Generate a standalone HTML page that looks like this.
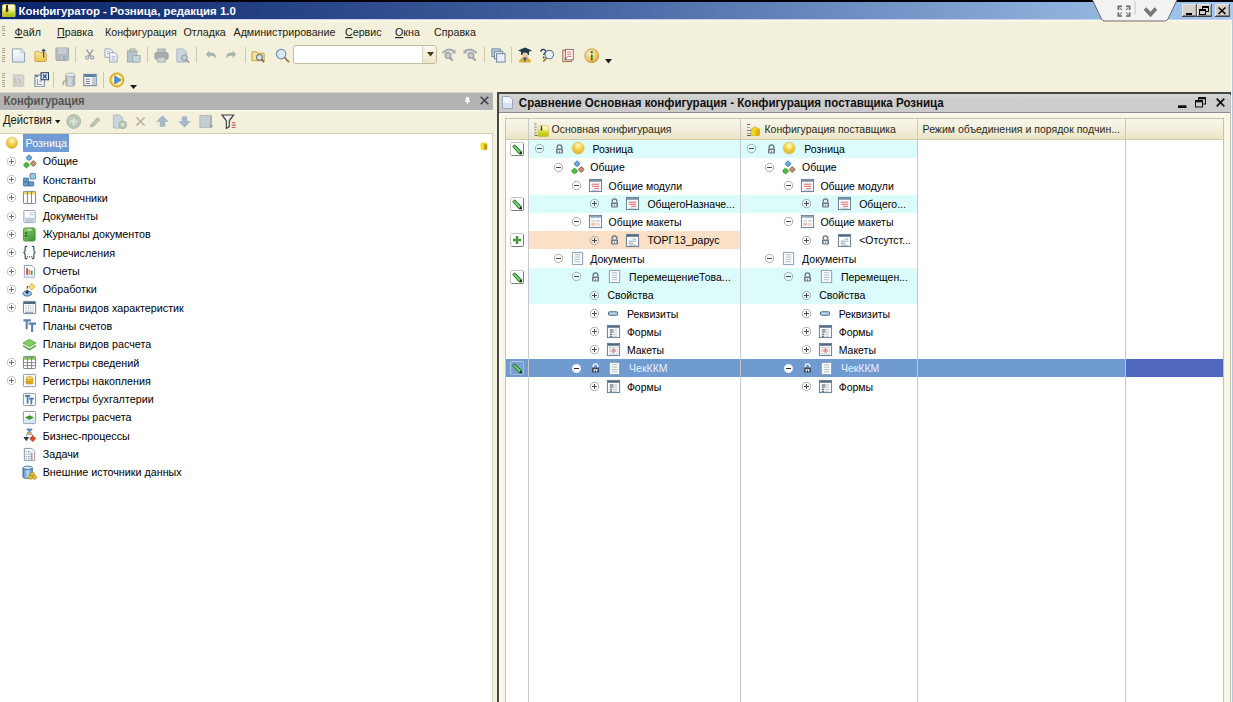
<!DOCTYPE html><html><head><meta charset="utf-8"><style>
html,body{margin:0;padding:0;}body{width:1233px;height:702px;overflow:hidden;position:relative;background:#f3f1dc;font-family:"Liberation Sans", sans-serif;}
div,svg{box-sizing:border-box;}
</style></head><body>
<div style="position:absolute;left:0px;top:20px;width:1233px;height:2px;background:#f7f5e8"></div>
<div style="position:absolute;left:1231.2px;top:20px;width:1px;height:682px;background:#f4f6fa"></div>
<div style="position:absolute;left:1232.1px;top:20px;width:1px;height:682px;background:#b4c8e2"></div>
<div style="position:absolute;left:0px;top:0px;width:1233px;height:2px;background:#000"></div>
<div style="position:absolute;left:0px;top:2px;width:1233px;height:17px;background:linear-gradient(to right,#0a246a 0%,#40609e 45%,#a6caf0 100%)"></div>
<div style="position:absolute;left:0px;top:19px;width:1233px;height:1px;background:#c8d2ea"></div>
<svg style="position:absolute;left:2px;top:3.7px" width="13.6" height="13.7" viewBox="0 0 13.6 13.7"><defs><linearGradient id="tig" x1="0" y1="0" x2="0" y2="1"><stop offset="0" stop-color="#fffbd8"/><stop offset="0.45" stop-color="#f4f0a0"/><stop offset="0.6" stop-color="#c8dc40"/><stop offset="1" stop-color="#98b818"/></linearGradient></defs><rect x="0.5" y="0.5" width="12.6" height="12.7" rx="1.5" fill="url(#tig)" stroke="#d8c040"/><path d="M4 1h2v2.5l.5 3.5-1.5 1.5L3.5 7 4 3.5z" fill="#3a3020"/><rect x="1.2" y="7" width="3" height="5" fill="#f0c020" opacity="0.6"/></svg>
<div style="position:absolute;left:18.6px;top:6.2px;font-size:11.4px;line-height:11.4px;color:#fff;font-weight:bold;white-space:nowrap;">Конфигуратор - Розница, редакция 1.0</div>
<svg style="position:absolute;left:1088px;top:0px" width="94" height="24" viewBox="0 0 94 24"><path d="M4 -1H89.5L80 19Q79 21 76.5 21H17Q14.5 21 13.5 19Z" fill="#f3f3f3" stroke="#5a5a5a" stroke-width="0.9"/><g fill="#6a6a6a"><path d="M29.5 5.5h4.5v1.6h-2.9v2.9h-1.6z"/><path d="M42.5 5.5h-4.5v1.6h2.9v2.9h1.6z"/><path d="M29.5 16.8h4.5v-1.6h-2.9v-2.9h-1.6z"/><path d="M42.5 16.8h-4.5v-1.6h2.9v-2.9h1.6z"/></g><g stroke="#8a8a8a" stroke-width="1.2"><path d="M31.5 7.5l2.5 2.5M40.5 7.5l-2.5 2.5M31.5 14.8l2.5-2.5M40.5 14.8l-2.5-2.5"/></g><line x1="47" y1="1" x2="47" y2="14.5" stroke="#c8c8c8"/><path d="M57 8.5l5.5 6 5.5-6" fill="none" stroke="#777" stroke-width="3.6" stroke-linejoin="miter"/></svg>
<svg style="position:absolute;left:1182px;top:4px" width="15" height="13" viewBox="0 0 15 13"><rect x="0" y="0" width="15" height="13" fill="#d4d0c8"/><path d="M0 13V0h15" fill="none" stroke="#fff" stroke-width="1"/><path d="M0 12.5h14.5V0" fill="none" stroke="#404040" stroke-width="1"/><path d="M1 11.5h13V1" fill="none" stroke="#808080" stroke-width="1"/><rect x="4" y="9" width="6" height="2" fill="#000"/></svg>
<svg style="position:absolute;left:1197.3px;top:4px" width="15" height="13" viewBox="0 0 15 13"><rect x="0" y="0" width="15" height="13" fill="#d4d0c8"/><path d="M0 13V0h15" fill="none" stroke="#fff" stroke-width="1"/><path d="M0 12.5h14.5V0" fill="none" stroke="#404040" stroke-width="1"/><path d="M1 11.5h13V1" fill="none" stroke="#808080" stroke-width="1"/><rect x="5.5" y="2.5" width="6" height="5" fill="none" stroke="#000"/><rect x="5.5" y="2.5" width="6" height="1.5" fill="#000"/><rect x="2.5" y="5.5" width="6" height="5" fill="#d4d0c8" stroke="#000"/><rect x="2.5" y="5.5" width="6" height="1.5" fill="#000"/></svg>
<svg style="position:absolute;left:1214.7px;top:4px" width="15" height="13" viewBox="0 0 15 13"><rect x="0" y="0" width="15" height="13" fill="#d4d0c8"/><path d="M0 13V0h15" fill="none" stroke="#fff" stroke-width="1"/><path d="M0 12.5h14.5V0" fill="none" stroke="#404040" stroke-width="1"/><path d="M1 11.5h13V1" fill="none" stroke="#808080" stroke-width="1"/><path d="M3.5 3.5l7 6.5M10.5 3.5l-7 6.5" stroke="#000" stroke-width="1.6"/></svg>
<div style="position:absolute;left:2px;top:26px;width:3px;height:11px;background:repeating-linear-gradient(to bottom,#a8a490 0 1px,transparent 1px 2.2px)"></div>
<div style="position:absolute;left:14.6px;top:26.9px;font-size:10.7px;line-height:10.7px;color:#1c1c10;font-weight:normal;white-space:nowrap;transform:scaleY(1.06);transform-origin:0 9.06px;"><span style="text-decoration:underline">Ф</span>айл</div>
<div style="position:absolute;left:57px;top:26.9px;font-size:10.7px;line-height:10.7px;color:#1c1c10;font-weight:normal;white-space:nowrap;transform:scaleY(1.06);transform-origin:0 9.06px;"><span style="text-decoration:underline">П</span>равка</div>
<div style="position:absolute;left:105px;top:26.9px;font-size:10.7px;line-height:10.7px;color:#1c1c10;font-weight:normal;white-space:nowrap;transform:scaleY(1.06);transform-origin:0 9.06px;">Конфигурация</div>
<div style="position:absolute;left:183.5px;top:26.9px;font-size:10.7px;line-height:10.7px;color:#1c1c10;font-weight:normal;white-space:nowrap;transform:scaleY(1.06);transform-origin:0 9.06px;">Отладка</div>
<div style="position:absolute;left:233.5px;top:26.9px;font-size:10.7px;line-height:10.7px;color:#1c1c10;font-weight:normal;white-space:nowrap;transform:scaleY(1.06);transform-origin:0 9.06px;">Администрирование</div>
<div style="position:absolute;left:345px;top:26.9px;font-size:10.7px;line-height:10.7px;color:#1c1c10;font-weight:normal;white-space:nowrap;transform:scaleY(1.06);transform-origin:0 9.06px;"><span style="text-decoration:underline">С</span>ервис</div>
<div style="position:absolute;left:395px;top:26.9px;font-size:10.7px;line-height:10.7px;color:#1c1c10;font-weight:normal;white-space:nowrap;transform:scaleY(1.06);transform-origin:0 9.06px;"><span style="text-decoration:underline">О</span>кна</div>
<div style="position:absolute;left:434px;top:26.9px;font-size:10.7px;line-height:10.7px;color:#1c1c10;font-weight:normal;white-space:nowrap;transform:scaleY(1.06);transform-origin:0 9.06px;">Справка</div>
<div style="position:absolute;left:2px;top:48px;width:3px;height:14px;background:repeating-linear-gradient(to bottom,#a8a490 0 1px,transparent 1px 2.2px)"></div>
<div style="position:absolute;left:2px;top:72.5px;width:3px;height:14px;background:repeating-linear-gradient(to bottom,#a8a490 0 1px,transparent 1px 2.2px)"></div>
<svg style="position:absolute;left:11.2px;top:47.5px" width="15" height="15" viewBox="0 0 16 16"><defs><linearGradient id="gnd" x1="0" y1="0" x2="0" y2="1"><stop offset="0" stop-color="#fbfdff"/><stop offset="1" stop-color="#d8e4f0"/></linearGradient></defs><path d="M1.5 1h9.5l3.5 3.5v10.5h-13z" fill="url(#gnd)" stroke="#8a9cae" stroke-linejoin="round"/><path d="M10.5 1v4h4" fill="#e8eef4" stroke="#a8b8c8" stroke-width="0.8"/></svg>
<svg style="position:absolute;left:33.5px;top:47px" width="14" height="15" viewBox="0 0 16 16"><defs><linearGradient id="gfo" x1="0" y1="0" x2="0" y2="1"><stop offset="0" stop-color="#fbe8a0"/><stop offset="1" stop-color="#e8c050"/></linearGradient></defs><path d="M1 5.5q0-1 1-1h3.5l1.5 1.5h6q1 0 1 1v8q0 1-1 1H2q-1 0-1-1z" fill="url(#gfo)" stroke="#c8a040"/><path d="M11 11.5V2.5" stroke="#2a4a70" stroke-width="1.3"/><path d="M8.3 4.2L11 1l2.7 3.2z" fill="#2a4a70"/></svg>
<svg style="position:absolute;left:55px;top:47.3px" width="14.5" height="14.5" viewBox="0 0 16 16"><rect x="1" y="1" width="14" height="14" rx="1" fill="#b4bcc4" stroke="#a0a8b0"/><rect x="3.5" y="1.5" width="9" height="5.5" fill="#d0d6dc"/><path d="M4.5 3h7M4.5 5h7" stroke="#b0b8c0" stroke-width="0.8"/><rect x="4" y="9.5" width="8" height="5" fill="#a4acb4"/><rect x="6" y="10.5" width="2" height="3" fill="#d0d6dc"/></svg>
<div style="position:absolute;left:75px;top:47px;width:1px;height:16px;background:#cfcab2"></div>
<svg style="position:absolute;left:83.5px;top:47.3px" width="11.5" height="14.5" viewBox="0 0 16 16"><path d="M3.5 1.5L10 11M12.5 1.5L6 11" stroke="#9aa2aa" stroke-width="2.2"/><circle cx="4.6" cy="12.6" r="2.2" fill="#eef0f2" stroke="#98a0a8" stroke-width="1.6"/><circle cx="11.4" cy="12.6" r="2.2" fill="#eef0f2" stroke="#98a0a8" stroke-width="1.6"/></svg>
<svg style="position:absolute;left:103.5px;top:47.5px" width="15" height="15" viewBox="0 0 16 16"><path d="M1 1h6l2 2v7H1z" fill="#f0f4f8" stroke="#98a8b8"/><path d="M6 5h6l2 2v8H6z" fill="#f0f4f8" stroke="#98a8b8"/><path d="M8 9h4M8 11h4M8 13h4M3 4h3M3 6h3" stroke="#98a8b8" stroke-width="0.8"/></svg>
<svg style="position:absolute;left:125.5px;top:47.5px" width="15" height="15" viewBox="0 0 16 16"><rect x="1.5" y="3" width="10" height="12" fill="#b8c4cc" stroke="#a0acb4"/><rect x="4.5" y="1" width="5" height="3" fill="#c8ccc4" stroke="#a8a898"/><rect x="7" y="8" width="8" height="7" fill="#c8d4dc" stroke="#a0acb4"/></svg>
<div style="position:absolute;left:146.5px;top:47px;width:1px;height:16px;background:#cfcab2"></div>
<svg style="position:absolute;left:153.5px;top:47.5px" width="15" height="15" viewBox="0 0 16 16"><rect x="4" y="1" width="8" height="5" fill="#c0c4c4" stroke="#a8acac"/><rect x="1" y="5" width="14" height="7" rx="1.5" fill="#a8acac" stroke="#989c9c"/><rect x="4" y="10" width="8" height="5" fill="#d0d4d4" stroke="#a8acac"/></svg>
<svg style="position:absolute;left:175px;top:47.5px" width="15" height="15" viewBox="0 0 16 16"><path d="M2 1h7l3 3v11H2z" fill="#c8d4e0" stroke="#a8b8c8"/><circle cx="10" cy="10.5" r="3" fill="#c0ccd8" stroke="#98a0a8" stroke-width="1.2"/><path d="M12 12.5l3 3" stroke="#a08878" stroke-width="1.6"/></svg>
<div style="position:absolute;left:195.8px;top:47px;width:1px;height:16px;background:#cfcab2"></div>
<svg style="position:absolute;left:205px;top:48.5px" width="12" height="12" viewBox="0 0 16 16"><path d="M1 7l5-5v3h3c4 0 6 3 5 8-1-3-3-4-5-4H6v3z" fill="#a8b4a8"/></svg>
<svg style="position:absolute;left:225px;top:48.5px" width="12" height="12" viewBox="0 0 16 16"><path d="M15 7l-5-5v3H7c-4 0-6 3-5 8 1-3 3-4 5-4h3v3z" fill="#a8b4a8"/></svg>
<div style="position:absolute;left:245px;top:47px;width:1px;height:16px;background:#cfcab2"></div>
<svg style="position:absolute;left:251px;top:47.5px" width="15" height="15" viewBox="0 0 16 16"><path d="M1 4h5l1 1.5h7v8H1z" fill="#f4e090" stroke="#c0a040"/><circle cx="9" cy="10" r="3" fill="#dce8f0" stroke="#607080" stroke-width="1.1"/><path d="M11 12l3 3" stroke="#906040" stroke-width="1.8"/></svg>
<svg style="position:absolute;left:275px;top:47.5px" width="15" height="15" viewBox="0 0 16 16"><circle cx="6.5" cy="6.5" r="5" fill="#d8e8f8" stroke="#7890a8" stroke-width="1.3"/><path d="M10 10l5 5" stroke="#a07050" stroke-width="2"/></svg>
<div style="position:absolute;left:293px;top:45.2px;width:143.6px;height:18.4px;background:#fff;border:1px solid #c4bc9c;border-radius:3px"></div>
<div style="position:absolute;left:422.3px;top:46.2px;width:13.3px;height:16.4px;background:linear-gradient(#fbf9ee,#ece6cc);border-left:1px solid #d8d2b8;border-radius:0 2px 2px 0"></div>
<svg style="position:absolute;left:426.5px;top:52.3px" width="7" height="4.6" viewBox="0 0 7 4.6"><path d="M0 0h7L3.5 4.6z" fill="#4a3a10"/></svg>
<svg style="position:absolute;left:441px;top:47.3px" width="15" height="15" viewBox="0 0 16 16"><path d="M1.5 6.5Q8 0 14.5 5" fill="none" stroke="#a8b0b4" stroke-width="2.2"/><path d="M15.5 2.5v4.5h-4.5z" fill="#a8b0b4"/><circle cx="7.5" cy="9" r="3" fill="#c8ccd0" stroke="#989ca0" stroke-width="1.3"/><path d="M9.5 11.5l3 3" stroke="#a09890" stroke-width="2"/></svg>
<svg style="position:absolute;left:462.7px;top:47.3px" width="15" height="15" viewBox="0 0 16 16"><path d="M14.5 6.5Q8 0 1.5 5" fill="none" stroke="#a8b0b4" stroke-width="2.2"/><path d="M0.5 2.5v4.5h4.5z" fill="#a8b0b4"/><circle cx="8.5" cy="9" r="3" fill="#c8ccd0" stroke="#989ca0" stroke-width="1.3"/><path d="M10.5 11.5l3 3" stroke="#a09890" stroke-width="2"/></svg>
<div style="position:absolute;left:484px;top:47px;width:1px;height:16px;background:#cfcab2"></div>
<svg style="position:absolute;left:490.5px;top:47.5px" width="15" height="15" viewBox="0 0 16 16"><rect x="1" y="1" width="9" height="8" fill="#c8d8e8" stroke="#6a8098"/><rect x="3.5" y="3.5" width="9" height="8" fill="#d8e4f0" stroke="#6a8098"/><rect x="6" y="6" width="9" height="9" fill="#e8f0f8" stroke="#6a8098"/></svg>
<div style="position:absolute;left:510.5px;top:47px;width:1px;height:16px;background:#cfcab2"></div>
<svg style="position:absolute;left:517.4px;top:46px" width="16" height="17" viewBox="0 0 16 16"><path d="M1 4l7-3 7 3-7 3z" fill="#203848"/><path d="M4 5.5v3h8v-3" fill="#203848"/><circle cx="8" cy="9" r="3" fill="#f0c8a0"/><path d="M2 16c0-3 2-5 6-5s6 2 6 5z" fill="#d8b040"/><path d="M6 11l2 5 2-5" fill="#406080"/></svg>
<svg style="position:absolute;left:539px;top:47.5px" width="16" height="15" viewBox="0 0 16 16"><path d="M1.5 4a2.5 2.5 0 0 1 5 0c0 1.5-2 2-2 3.5" fill="none" stroke="#203060" stroke-width="1.4"/><circle cx="4.5" cy="10" r="0.9" fill="#203060"/><circle cx="10.5" cy="7" r="4.5" fill="#e8f0f8" stroke="#6a7a8a" stroke-width="1.2"/><path d="M7.5 10.5L4 14.5" stroke="#a07850" stroke-width="1.8"/></svg>
<svg style="position:absolute;left:561px;top:47.5px" width="14" height="15" viewBox="0 0 16 16"><rect x="2" y="2" width="10" height="13" fill="#f4e0c8" stroke="#a06040"/><rect x="5" y="1" width="9" height="12" fill="#fff" stroke="#8a6048"/><path d="M7 4h5M7 6.5h5M7 9h5" stroke="#e04040" stroke-width="0.9"/><path d="M4 13l3-3" stroke="#404040"/></svg>
<svg style="position:absolute;left:583.7px;top:47.5px" width="15.5" height="15.5" viewBox="0 0 16 16"><defs><radialGradient id="gin" cx="0.4" cy="0.35" r="0.7"><stop offset="0" stop-color="#fff4c8"/><stop offset="0.7" stop-color="#f0c060"/><stop offset="1" stop-color="#d89838"/></radialGradient></defs><circle cx="8" cy="8" r="7.2" fill="url(#gin)" stroke="#c89040" stroke-width="0.8"/><circle cx="8" cy="4.4" r="1.2" fill="#3a7a20"/><rect x="7" y="6.6" width="2" height="6.4" rx="0.5" fill="#3a7a20"/></svg>
<svg style="position:absolute;left:604.5px;top:59px" width="7" height="4.5" viewBox="0 0 7 4.5"><path d="M0 0h7L3.5 4.5z" fill="#1a1a1a"/></svg>
<svg style="position:absolute;left:11.8px;top:72.5px" width="13" height="15" viewBox="0 0 16 16"><rect x="1.5" y="1" width="13" height="14" rx="1" fill="#d4d4d0" stroke="#c0c0bc"/><path d="M4 4v7h3M7 7h3v4h2" stroke="#b4b4b0" fill="none" stroke-width="0.9"/></svg>
<svg style="position:absolute;left:34.4px;top:71.5px" width="15" height="15.5" viewBox="0 0 16 16"><rect x="1" y="3" width="10" height="12.5" fill="#f4f6f8" stroke="#6a7c90"/><rect x="1.5" y="3.5" width="3" height="1.5" fill="#506880"/><path d="M3.5 7v6h2M5.5 9.5h3M5.5 13h3" stroke="#607080" stroke-width="0.8" fill="none"/><rect x="7.5" y="0.5" width="8" height="7.5" fill="#e8f0f8" stroke="#203850" stroke-width="1.1"/><path d="M9.5 2.3l4 4M13.5 2.3l-4 4" stroke="#2a5a98" stroke-width="1.6"/></svg>
<div style="position:absolute;left:53.2px;top:72px;width:1px;height:16px;background:#cfcab2"></div>
<svg style="position:absolute;left:59.7px;top:72.3px" width="16" height="15.5" viewBox="0 0 16 16"><defs><linearGradient id="gdb" x1="0" y1="0" x2="1" y2="0"><stop offset="0" stop-color="#a8b0b4"/><stop offset="0.45" stop-color="#dce0e4"/><stop offset="1" stop-color="#a0a8ac"/></linearGradient></defs><path d="M5.5 3v10c0 1.2 2 2 4.8 2s4.8-.8 4.8-2V3" fill="url(#gdb)" stroke="#a4acb0" stroke-width="0.8"/><ellipse cx="10.3" cy="3" rx="4.8" ry="2" fill="#e4e8ea" stroke="#a4acb0" stroke-width="0.8"/><path d="M7 8.5C4 8.5 2.5 10.5 3 13.5" fill="none" stroke="#a8b4a0" stroke-width="1.7"/><path d="M5.5 6.5L8 8.5 5.5 10.5z" fill="#a8b4a0"/></svg>
<svg style="position:absolute;left:83px;top:72.5px" width="14" height="14" viewBox="0 0 16 16"><rect x="1" y="1.5" width="14" height="13" fill="#fff" stroke="#506880"/><rect x="1.5" y="2" width="13" height="2.5" fill="#5078a0"/><rect x="10" y="5" width="4.5" height="9" fill="#c0c8d0"/><path d="M3 7h5M3 9.5h5M3 12h5" stroke="#405060" stroke-width="0.9"/></svg>
<div style="position:absolute;left:102.5px;top:72px;width:1px;height:16px;background:#cfcab2"></div>
<svg style="position:absolute;left:108.8px;top:72px" width="15.8" height="15.8" viewBox="0 0 16 16"><defs><radialGradient id="gpl" cx="0.5" cy="0.35" r="0.7"><stop offset="0" stop-color="#fffce8"/><stop offset="1" stop-color="#f4e4a0"/></radialGradient></defs><circle cx="8" cy="8" r="7.1" fill="#f0c028" stroke="#c89818" stroke-width="0.9"/><circle cx="8" cy="8" r="5.4" fill="url(#gpl)"/><path d="M5.8 3.8v8.4L12.5 8z" fill="#4a94d8" stroke="#2a6ab0" stroke-width="0.6"/></svg>
<svg style="position:absolute;left:129.8px;top:85px" width="7" height="4" viewBox="0 0 7 4"><path d="M0 0h7L3.5 4z" fill="#1a1a1a"/></svg>
<div style="position:absolute;left:0px;top:92.2px;width:493px;height:1px;background:#d4d4cc"></div>
<div style="position:absolute;left:0px;top:93px;width:493px;height:16.8px;background:#b3b3b3"></div>
<div style="position:absolute;left:0px;top:109.8px;width:493px;height:1.6px;background:#faf8e8"></div>
<div style="position:absolute;left:3.4px;top:96px;font-size:11.2px;line-height:11.2px;color:#555555;font-weight:bold;white-space:nowrap;transform:scaleY(1.06);transform-origin:0 9.48px;">Конфигурация</div>
<svg style="position:absolute;left:464.5px;top:96.5px" width="5" height="7.5" viewBox="0 0 5 7.5"><path d="M1 0.5h3v4H1z" fill="#fff" stroke="#f0f0f0"/><path d="M0 4.5h5M2.5 4.5V7.5" stroke="#fff"/></svg>
<svg style="position:absolute;left:479.6px;top:96.3px" width="9" height="9" viewBox="0 0 9 9"><path d="M0.7 0.7l7.6 7.6M8.3 0.7L0.7 8.3" stroke="#444" stroke-width="1.6"/></svg>
<div style="position:absolute;left:2.9px;top:114.6px;font-size:11.2px;line-height:11.2px;color:#1c1c10;font-weight:normal;white-space:nowrap;transform:scaleY(1.1);transform-origin:0 9.48px;">Действия</div>
<svg style="position:absolute;left:55px;top:120px" width="5.5" height="3.5" viewBox="0 0 5.5 3.5"><path d="M0 0h5.5L2.75 3.5z" fill="#1a1a1a"/></svg>
<svg style="position:absolute;left:66.2px;top:113.9px" width="15.4" height="15" viewBox="0 0 16 16"><circle cx="8" cy="8" r="7.4" fill="#bcc8b8" stroke="#a8b8a4"/><path d="M8 4v8M4 8h8" stroke="#dfe8dc" stroke-width="2"/></svg>
<svg style="position:absolute;left:89.3px;top:114.5px" width="12.5" height="13" viewBox="0 0 16 16"><path d="M2 12l9-9 3 3-9 9H2z" fill="#b8c4b0" stroke="#a8b4a0" stroke-width="0.8"/></svg>
<svg style="position:absolute;left:111.6px;top:114px" width="15" height="15" viewBox="0 0 16 16"><path d="M1.5 1h7l3 3v11h-10z" fill="#c8d4dc" stroke="#b0bcc4"/><circle cx="11.5" cy="11.5" r="4" fill="#b8c8b4" stroke="#a0b09c"/><path d="M11.5 9.5v4M9.5 11.5h4" stroke="#e0e8dc" stroke-width="1.2"/></svg>
<svg style="position:absolute;left:134.7px;top:115.5px" width="11" height="11" viewBox="0 0 16 16"><path d="M2 2l12 12M14 2L2 14" stroke="#c4b4ac" stroke-width="2.4"/></svg>
<svg style="position:absolute;left:155.5px;top:114.5px" width="13" height="13" viewBox="0 0 16 16"><path d="M8 1l7 7h-4v6H5V8H1z" fill="#a8b8c8" stroke="#98a8b8" stroke-width="0.6"/></svg>
<svg style="position:absolute;left:177.9px;top:115px" width="13" height="13" viewBox="0 0 16 16"><path d="M8 15l7-7h-4V2H5v6H1z" fill="#a8b8c8" stroke="#98a8b8" stroke-width="0.6"/></svg>
<svg style="position:absolute;left:199.4px;top:114px" width="14" height="15" viewBox="0 0 16 16"><rect x="1" y="1" width="12" height="14" fill="#c4ccd4" stroke="#b0b8c0"/><path d="M14 1v13M12 12l2 3 2-3" stroke="#8090a0" fill="none"/></svg>
<svg style="position:absolute;left:221px;top:113.5px" width="15.5" height="15.5" viewBox="0 0 16 16"><path d="M1 1h12l-4.5 6v6l-3 2V7z" fill="#f0f0f0" stroke="#404040" stroke-width="1.2"/><path d="M11 9h4M11 11.5h4M11 14h4" stroke="#e04040" stroke-width="1"/><path d="M12 11.5h3" stroke="#40a0e0"/></svg>
<div style="position:absolute;left:0px;top:132.7px;width:493px;height:1px;background:#d2ccb0"></div>
<div style="position:absolute;left:0px;top:133.7px;width:493px;height:568.3px;background:#fff;border-right:1px solid #d8d4c0"></div>
<div style="position:absolute;left:23px;top:133.75px;width:46px;height:18px;background:#6f9bd6"></div>
<svg style="position:absolute;left:4.5px;top:136.1px" width="13.6" height="13.6" viewBox="0 0 16 16"><defs><radialGradient id="gc" cx="0.5" cy="0.3" r="0.75"><stop offset="0" stop-color="#fffbd0"/><stop offset="0.45" stop-color="#f4d448"/><stop offset="1" stop-color="#d8a818"/></radialGradient></defs><circle cx="8" cy="8" r="6.8" fill="url(#gc)" stroke="#d8c888" stroke-width="0.9"/></svg>
<div style="position:absolute;left:25.5px;top:137.9px;font-size:10.75px;line-height:10.75px;color:#fff;font-weight:normal;white-space:nowrap;transform:scaleY(1.07);transform-origin:0 9.10px;">Розница</div>
<svg style="position:absolute;left:6px;top:156px" width="11" height="11" viewBox="0 0 11 11"><circle cx="5.5" cy="5.5" r="4.2" fill="none" stroke="#c0c2c2" stroke-width="1"/><path d="M3 5.5h5" stroke="#707070" stroke-width="1"/><path d="M5.5 3v5" stroke="#707070" stroke-width="1"/></svg>
<svg style="position:absolute;left:21.7px;top:153.70000000000002px" width="15" height="15" viewBox="0 0 16 16"><rect x="-2.4" y="-2.4" width="4.8" height="4.8" rx="1.4" transform="translate(7.5 4) rotate(45)" fill="#6aaee0" stroke="#2f6a9a" stroke-width="0.8"/><rect x="-2.4" y="-2.4" width="4.8" height="4.8" rx="1.4" transform="translate(4.8 11.8) rotate(45)" fill="#50c040" stroke="#2a8020" stroke-width="0.8"/><rect x="-2.4" y="-2.4" width="4.8" height="4.8" rx="1.4" transform="translate(12 10.2) rotate(45)" fill="#c09070" stroke="#7a5030" stroke-width="0.8"/></svg>
<div style="position:absolute;left:42.7px;top:156.20000000000002px;font-size:10.75px;line-height:10.75px;color:#000;font-weight:normal;white-space:nowrap;transform:scaleY(1.07);transform-origin:0 9.10px;">Общие</div>
<svg style="position:absolute;left:6px;top:174px" width="11" height="11" viewBox="0 0 11 11"><circle cx="5.5" cy="5.5" r="4.2" fill="none" stroke="#c0c2c2" stroke-width="1"/><path d="M3 5.5h5" stroke="#707070" stroke-width="1"/><path d="M5.5 3v5" stroke="#707070" stroke-width="1"/></svg>
<svg style="position:absolute;left:21.7px;top:172.0px" width="15" height="15" viewBox="0 0 16 16"><g fill="#6a9cc8" stroke="#2f5f8a" stroke-width="0.8"><rect x="1.5" y="6.5" width="5.5" height="4" rx="0.8"/><rect x="1.5" y="10.5" width="5.5" height="4.5" rx="0.8"/><rect x="7" y="10.5" width="5.5" height="4.5" rx="0.8"/></g><rect x="8.5" y="1.5" width="6" height="6" rx="0.8" fill="#9cc8e8" stroke="#3f6f9a" stroke-width="0.8"/></svg>
<div style="position:absolute;left:42.7px;top:174.5px;font-size:10.75px;line-height:10.75px;color:#000;font-weight:normal;white-space:nowrap;transform:scaleY(1.07);transform-origin:0 9.10px;">Константы</div>
<svg style="position:absolute;left:6px;top:192px" width="11" height="11" viewBox="0 0 11 11"><circle cx="5.5" cy="5.5" r="4.2" fill="none" stroke="#c0c2c2" stroke-width="1"/><path d="M3 5.5h5" stroke="#707070" stroke-width="1"/><path d="M5.5 3v5" stroke="#707070" stroke-width="1"/></svg>
<svg style="position:absolute;left:21.7px;top:190.3px" width="15" height="15" viewBox="0 0 16 16"><rect x="1.5" y="1.5" width="13" height="13" rx="0.8" fill="#fff" stroke="#687c90" stroke-width="1"/><rect x="2" y="2" width="12" height="2.6" fill="#e8d860"/><line x1="5.8" y1="2" x2="5.8" y2="14" stroke="#687c90"/><line x1="10.2" y1="2" x2="10.2" y2="14" stroke="#687c90"/></svg>
<div style="position:absolute;left:42.7px;top:192.8px;font-size:10.75px;line-height:10.75px;color:#000;font-weight:normal;white-space:nowrap;transform:scaleY(1.07);transform-origin:0 9.10px;">Справочники</div>
<svg style="position:absolute;left:6px;top:211px" width="11" height="11" viewBox="0 0 11 11"><circle cx="5.5" cy="5.5" r="4.2" fill="none" stroke="#c0c2c2" stroke-width="1"/><path d="M3 5.5h5" stroke="#707070" stroke-width="1"/><path d="M5.5 3v5" stroke="#707070" stroke-width="1"/></svg>
<svg style="position:absolute;left:21.7px;top:208.6px" width="15" height="15" viewBox="0 0 16 16"><rect x="2" y="1.5" width="12" height="13" rx="0.8" fill="#fafcfe" stroke="#8a9aaa" stroke-width="1"/><path d="M2.5 9h11v5h-11z" fill="#d0e0ee"/><path d="M8 4h4M8 6h4M4 10.5h8M4 12.5h8" stroke="#a0b0c0" stroke-width="0.8"/></svg>
<div style="position:absolute;left:42.7px;top:211.1px;font-size:10.75px;line-height:10.75px;color:#000;font-weight:normal;white-space:nowrap;transform:scaleY(1.07);transform-origin:0 9.10px;">Документы</div>
<svg style="position:absolute;left:6px;top:229px" width="11" height="11" viewBox="0 0 11 11"><circle cx="5.5" cy="5.5" r="4.2" fill="none" stroke="#c0c2c2" stroke-width="1"/><path d="M3 5.5h5" stroke="#707070" stroke-width="1"/><path d="M5.5 3v5" stroke="#707070" stroke-width="1"/></svg>
<svg style="position:absolute;left:21.7px;top:226.9px" width="15" height="15" viewBox="0 0 16 16"><defs><linearGradient id="gj" x1="0" y1="0" x2="1" y2="1"><stop offset="0" stop-color="#90d070"/><stop offset="1" stop-color="#3a9030"/></linearGradient></defs><rect x="1.5" y="1" width="12.5" height="14" rx="1.8" fill="url(#gj)" stroke="#4a8a38" stroke-width="0.9"/><path d="M5.5 3h5" stroke="#e0ffd0" stroke-width="1.2"/><path d="M3 6.5h2.5M3 9.5h2.5" stroke="#1a4a10" stroke-width="1.3"/></svg>
<div style="position:absolute;left:42.7px;top:229.4px;font-size:10.75px;line-height:10.75px;color:#000;font-weight:normal;white-space:nowrap;transform:scaleY(1.07);transform-origin:0 9.10px;">Журналы документов</div>
<svg style="position:absolute;left:6px;top:247px" width="11" height="11" viewBox="0 0 11 11"><circle cx="5.5" cy="5.5" r="4.2" fill="none" stroke="#c0c2c2" stroke-width="1"/><path d="M3 5.5h5" stroke="#707070" stroke-width="1"/><path d="M5.5 3v5" stroke="#707070" stroke-width="1"/></svg>
<svg style="position:absolute;left:21.7px;top:245.20000000000002px" width="15" height="15" viewBox="0 0 16 16"><path d="M5.5 1.5H4.2Q3.3 1.5 3.3 2.5v4L2 8l1.3 1.5v4q0 1 .9 1h1.3M10.5 1.5h1.3q.9 0 .9 1v4L14 8l-1.3 1.5v4q0 1-.9 1h-1.3" fill="none" stroke="#304860" stroke-width="1.2"/><rect x="5" y="12" width="1.3" height="1.3" fill="#304860"/><rect x="7.4" y="12" width="1.3" height="1.3" fill="#304860"/><rect x="9.8" y="12" width="1.3" height="1.3" fill="#304860"/></svg>
<div style="position:absolute;left:42.7px;top:247.70000000000002px;font-size:10.75px;line-height:10.75px;color:#000;font-weight:normal;white-space:nowrap;transform:scaleY(1.07);transform-origin:0 9.10px;">Перечисления</div>
<svg style="position:absolute;left:6px;top:266px" width="11" height="11" viewBox="0 0 11 11"><circle cx="5.5" cy="5.5" r="4.2" fill="none" stroke="#c0c2c2" stroke-width="1"/><path d="M3 5.5h5" stroke="#707070" stroke-width="1"/><path d="M5.5 3v5" stroke="#707070" stroke-width="1"/></svg>
<svg style="position:absolute;left:21.7px;top:263.5px" width="15" height="15" viewBox="0 0 16 16"><path d="M2.5 1.5h8l3 3v10h-11z" fill="#fafcfe" stroke="#8098b0" stroke-width="1"/><path d="M2.5 12h11v2.5h-11z" fill="#d8e4ee"/><rect x="4.5" y="4.5" width="1.8" height="7" fill="#c84030"/><rect x="7" y="6" width="1.8" height="5.5" fill="#e89040"/><rect x="9.5" y="7" width="1.8" height="4.5" fill="#40a040"/></svg>
<div style="position:absolute;left:42.7px;top:266.0px;font-size:10.75px;line-height:10.75px;color:#000;font-weight:normal;white-space:nowrap;transform:scaleY(1.07);transform-origin:0 9.10px;">Отчеты</div>
<svg style="position:absolute;left:6px;top:284px" width="11" height="11" viewBox="0 0 11 11"><circle cx="5.5" cy="5.5" r="4.2" fill="none" stroke="#c0c2c2" stroke-width="1"/><path d="M3 5.5h5" stroke="#707070" stroke-width="1"/><path d="M5.5 3v5" stroke="#707070" stroke-width="1"/></svg>
<svg style="position:absolute;left:21.7px;top:281.79999999999995px" width="15" height="15" viewBox="0 0 16 16"><path d="M10.5 1.5l3.5 3.5-3.5 3.5L7 5z" fill="#f8e070" stroke="#c0a020" stroke-width="0.8"/><ellipse cx="5.5" cy="12.3" rx="4.5" ry="2.7" fill="#90c4e8" stroke="#406890" stroke-width="1"/><path d="M5.5 5h2" stroke="#101010" stroke-width="1.1" stroke-dasharray="1 0.8"/><path d="M5.5 5v6" stroke="#101010" stroke-width="1.1" stroke-dasharray="1 0.8"/><path d="M3.5 10l2 2.8 2-2.8z" fill="#101010"/></svg>
<div style="position:absolute;left:42.7px;top:284.29999999999995px;font-size:10.75px;line-height:10.75px;color:#000;font-weight:normal;white-space:nowrap;transform:scaleY(1.07);transform-origin:0 9.10px;">Обработки</div>
<svg style="position:absolute;left:6px;top:302px" width="11" height="11" viewBox="0 0 11 11"><circle cx="5.5" cy="5.5" r="4.2" fill="none" stroke="#c0c2c2" stroke-width="1"/><path d="M3 5.5h5" stroke="#707070" stroke-width="1"/><path d="M5.5 3v5" stroke="#707070" stroke-width="1"/></svg>
<svg style="position:absolute;left:21.7px;top:300.1px" width="15" height="15" viewBox="0 0 16 16"><rect x="1.5" y="1.5" width="13" height="13" rx="0.8" fill="#fff" stroke="#687c90" stroke-width="1"/><rect x="2" y="2" width="12" height="2.3" fill="#506880"/><path d="M4.3 5.5v6M6.8 5.5v6M9.3 5.5v6M11.8 5.5v6" stroke="#8a98a8" stroke-width="0.9" stroke-dasharray="1 0.7"/><path d="M3.5 13h9" stroke="#303840" stroke-width="1.1" stroke-dasharray="1.2 1"/></svg>
<div style="position:absolute;left:42.7px;top:302.6px;font-size:10.75px;line-height:10.75px;color:#000;font-weight:normal;white-space:nowrap;transform:scaleY(1.07);transform-origin:0 9.10px;">Планы видов характеристик</div>
<svg style="position:absolute;left:21.7px;top:318.4px" width="15" height="15" viewBox="0 0 16 16"><path d="M1.5 2.5h8M5 2.5v9.5M7 6h8M10.8 6v9" fill="none" stroke="#5a82aa" stroke-width="2.2"/></svg>
<div style="position:absolute;left:42.7px;top:320.9px;font-size:10.75px;line-height:10.75px;color:#000;font-weight:normal;white-space:nowrap;transform:scaleY(1.07);transform-origin:0 9.10px;">Планы счетов</div>
<svg style="position:absolute;left:21.7px;top:336.7px" width="15" height="15" viewBox="0 0 16 16"><path d="M8 2.5l7 4-7 4-7-4z" fill="#80cc60" stroke="#3e9a2e" stroke-width="0.7"/><path d="M1.5 9l6.5 3.8L14.5 9l.5.5L8 14 1 9.5z" fill="#4aaa38" stroke="#3a8a2a" stroke-width="0.6"/></svg>
<div style="position:absolute;left:42.7px;top:339.2px;font-size:10.75px;line-height:10.75px;color:#000;font-weight:normal;white-space:nowrap;transform:scaleY(1.07);transform-origin:0 9.10px;">Планы видов расчета</div>
<svg style="position:absolute;left:6px;top:357px" width="11" height="11" viewBox="0 0 11 11"><circle cx="5.5" cy="5.5" r="4.2" fill="none" stroke="#c0c2c2" stroke-width="1"/><path d="M3 5.5h5" stroke="#707070" stroke-width="1"/><path d="M5.5 3v5" stroke="#707070" stroke-width="1"/></svg>
<svg style="position:absolute;left:21.7px;top:355.0px" width="15" height="15" viewBox="0 0 16 16"><rect x="1.5" y="1.5" width="13" height="13" rx="1" fill="#fff" stroke="#6a7a88" stroke-width="1"/><rect x="2" y="2" width="12" height="3" fill="#88c060"/><path d="M2 8.2h12M2 11.3h12M5.8 2v12M10.2 2v12" stroke="#6a7a88" stroke-width="0.9"/></svg>
<div style="position:absolute;left:42.7px;top:357.5px;font-size:10.75px;line-height:10.75px;color:#000;font-weight:normal;white-space:nowrap;transform:scaleY(1.07);transform-origin:0 9.10px;">Регистры сведений</div>
<svg style="position:absolute;left:6px;top:375px" width="11" height="11" viewBox="0 0 11 11"><circle cx="5.5" cy="5.5" r="4.2" fill="none" stroke="#c0c2c2" stroke-width="1"/><path d="M3 5.5h5" stroke="#707070" stroke-width="1"/><path d="M5.5 3v5" stroke="#707070" stroke-width="1"/></svg>
<svg style="position:absolute;left:21.7px;top:373.29999999999995px" width="15" height="15" viewBox="0 0 16 16"><rect x="1.5" y="1.5" width="13" height="13" rx="1" fill="#f8fafc" stroke="#8092a4" stroke-width="1"/><ellipse cx="8" cy="10" rx="4" ry="1.8" fill="#e0b020" stroke="#b08010" stroke-width="0.6"/><ellipse cx="8" cy="7.6" rx="4" ry="1.8" fill="#f0c838" stroke="#b08010" stroke-width="0.6"/><ellipse cx="8" cy="5.4" rx="3.6" ry="1.6" fill="#f8e070" stroke="#b08010" stroke-width="0.6"/></svg>
<div style="position:absolute;left:42.7px;top:375.79999999999995px;font-size:10.75px;line-height:10.75px;color:#000;font-weight:normal;white-space:nowrap;transform:scaleY(1.07);transform-origin:0 9.10px;">Регистры накопления</div>
<svg style="position:absolute;left:21.7px;top:391.59999999999997px" width="15" height="15" viewBox="0 0 16 16"><rect x="1.5" y="1.5" width="13" height="13" rx="1" fill="#f4f8fc" stroke="#8092a4" stroke-width="1"/><path d="M3.3 4.2h5.5M6 4.2v8M7.5 7h5M10 7v6" fill="none" stroke="#4a78a8" stroke-width="1.8"/></svg>
<div style="position:absolute;left:42.7px;top:394.09999999999997px;font-size:10.75px;line-height:10.75px;color:#000;font-weight:normal;white-space:nowrap;transform:scaleY(1.07);transform-origin:0 9.10px;">Регистры бухгалтерии</div>
<svg style="position:absolute;left:21.7px;top:409.9px" width="15" height="15" viewBox="0 0 16 16"><rect x="1.5" y="1.5" width="13" height="13" rx="1" fill="#fafcfe" stroke="#8092a4" stroke-width="1"/><path d="M2 9.5h12v4.5H2z" fill="#d8e6f2"/><path d="M8 5.5l5 2.5-5 2.5-5-2.5z" fill="#3a9a30"/></svg>
<div style="position:absolute;left:42.7px;top:412.4px;font-size:10.75px;line-height:10.75px;color:#000;font-weight:normal;white-space:nowrap;transform:scaleY(1.07);transform-origin:0 9.10px;">Регистры расчета</div>
<svg style="position:absolute;left:21.7px;top:428.2px" width="15" height="15" viewBox="0 0 16 16"><path d="M5 1h6L8 4.5z" fill="#5aa0d8" stroke="#2a5a90" stroke-width="0.6"/><rect x="6" y="4.5" width="4" height="2.3" fill="#f0c070" stroke="#b08040" stroke-width="0.5"/><path d="M5 9V6.5h6V9" fill="none" stroke="#8090a0" stroke-width="0.8"/><path d="M1.5 9.5h6L4.5 14z" fill="#203850"/><path d="M11.5 8l3.3 3.3-3.3 3.3-3.3-3.3z" fill="#e04828" stroke="#a02810" stroke-width="0.5"/></svg>
<div style="position:absolute;left:42.7px;top:430.7px;font-size:10.75px;line-height:10.75px;color:#000;font-weight:normal;white-space:nowrap;transform:scaleY(1.07);transform-origin:0 9.10px;">Бизнес-процессы</div>
<svg style="position:absolute;left:21.7px;top:446.5px" width="15" height="15" viewBox="0 0 16 16"><path d="M2.5 1.5h8l3 3v10h-11z" fill="#fafcfe" stroke="#8098b0" stroke-width="1"/><path d="M4 5h1.3M4 7.5h1.3M4 10h1.3M4 12.5h1.3M6.5 5h3M6.5 7.5h3M6.5 10h3M6.5 12.5h3" stroke="#607080" stroke-width="1" stroke-dasharray="1 .6"/><path d="M10.5 6v7.5" stroke="#e07070" stroke-width="1.4"/></svg>
<div style="position:absolute;left:42.7px;top:449.0px;font-size:10.75px;line-height:10.75px;color:#000;font-weight:normal;white-space:nowrap;transform:scaleY(1.07);transform-origin:0 9.10px;">Задачи</div>
<svg style="position:absolute;left:21.7px;top:464.8px" width="15" height="15" viewBox="0 0 16 16"><defs><linearGradient id="ge" x1="0" y1="0" x2="1" y2="0"><stop offset="0" stop-color="#4a88c0"/><stop offset="0.5" stop-color="#b0d8f4"/><stop offset="1" stop-color="#5a98d0"/></linearGradient></defs><path d="M1 3v9.5c0 1.2 2.2 2 5 2s5-.8 5-2V3" fill="url(#ge)" stroke="#305880" stroke-width="0.8"/><ellipse cx="6" cy="3" rx="5" ry="1.8" fill="#d0e8f8" stroke="#305880" stroke-width="0.8"/><g fill="#f0c030" stroke="#a07810" stroke-width="0.7"><circle cx="11" cy="9.8" r="2.2"/><circle cx="9" cy="13" r="2.2"/><circle cx="13.2" cy="13" r="2.2"/></g></svg>
<div style="position:absolute;left:42.7px;top:467.3px;font-size:10.75px;line-height:10.75px;color:#000;font-weight:normal;white-space:nowrap;transform:scaleY(1.07);transform-origin:0 9.10px;">Внешние источники данных</div>
<svg style="position:absolute;left:479.8px;top:141.6px" width="8" height="8.5" viewBox="0 0 8 8.5"><path d="M0.5 1.5L2.5 0.5h3l1.8 1.2v5.5L5.5 8.3h-3L0.5 7z" fill="#f0e020"/><path d="M4.2 1.8h3v5.5L5.5 8.3H4.2z" fill="#c8a818"/><path d="M5 3v4M6.3 3v4" stroke="#a08010" stroke-width="0.5"/></svg>
<div style="position:absolute;left:493px;top:92px;width:4px;height:610px;background:#f3f1dc"></div>
<div style="position:absolute;left:497px;top:92.3px;width:734px;height:609.7px;background:#454545;"></div>
<div style="position:absolute;left:499.3px;top:94.3px;width:730.8px;height:607.7px;background:#f9f7e4"></div>
<div style="position:absolute;left:499.3px;top:94.3px;width:730.8px;height:17.4px;background:linear-gradient(#d6d6d6,#cdcdcd 30%,#cbcbcb)"></div>
<div style="position:absolute;left:499.3px;top:111.7px;width:730.8px;height:1.2px;background:#8c8c8c"></div>
<div style="position:absolute;left:1230px;top:94.8px;width:1.2px;height:607.2px;background:#c4c0b4"></div>
<div style="position:absolute;left:499.3px;top:112.9px;width:2px;height:590px;background:#fdfcf4"></div>
<div style="position:absolute;left:499.3px;top:112.9px;width:730.8px;height:2px;background:#fbfaf0"></div>
<svg style="position:absolute;left:501.9px;top:95.8px" width="11" height="13" viewBox="0 0 11 13"><path d="M0.5 0.5h7l3 3v9h-10z" fill="#f0f6fc" stroke="#98a8b8"/><path d="M1 7h9v5H1z" fill="#d8e4f0"/></svg>
<div style="position:absolute;left:518.8px;top:98.0px;font-size:11.55px;line-height:11.55px;color:#101010;font-weight:bold;white-space:nowrap;transform:scaleY(1.08);transform-origin:0 9.78px;">Сравнение Основная конфигурация - Конфигурация поставщика Розница</div>
<svg style="position:absolute;left:1178px;top:104.8px" width="8.5" height="3.4" viewBox="0 0 8.5 3.4"><rect x="0" y="0.3" width="8.5" height="2.8" fill="#111"/></svg>
<svg style="position:absolute;left:1194.9px;top:97.2px" width="11" height="10.5" viewBox="0 0 11 10.5"><rect x="3.5" y="0.5" width="7" height="6.5" fill="none" stroke="#111"/><rect x="3.5" y="0.5" width="7" height="1.8" fill="#111"/><rect x="0.5" y="3.5" width="7" height="6.5" fill="#cbcbcb" stroke="#111"/><rect x="0.5" y="3.5" width="7" height="1.8" fill="#111"/></svg>
<svg style="position:absolute;left:1216.2px;top:98.3px" width="9" height="9" viewBox="0 0 9 9"><path d="M0.7 0.7l7.6 7.6M8.3 0.7L0.7 8.3" stroke="#111" stroke-width="1.7"/></svg>
<div style="position:absolute;left:505.2px;top:118.3px;width:718.3999999999999px;height:583.7px;background:#fff;border:1px solid #c8c4ac;border-bottom:none"></div>
<div style="position:absolute;left:506.2px;top:119.0px;width:716.3999999999999px;height:21px;background:linear-gradient(#f9f7ea,#f3efdc 50%,#ebe4c6);border-bottom:1px solid #d2cbaa"></div>
<div style="position:absolute;left:528.0px;top:119.3px;width:1px;height:583.7px;background:#c8c8c8"></div>
<div style="position:absolute;left:740.0px;top:119.3px;width:1px;height:583.7px;background:#c8c8c8"></div>
<div style="position:absolute;left:916.8px;top:119.3px;width:1px;height:583.7px;background:#c8c8c8"></div>
<div style="position:absolute;left:1125.3px;top:119.3px;width:1px;height:583.7px;background:#c8c8c8"></div>
<svg style="position:absolute;left:534.2px;top:122.8px" width="15" height="14" viewBox="0 0 15 14"><g stroke-width="1"><path d="M0.5 1h2" stroke="#a05050"/><path d="M0.5 4h2M0.5 7h2M0.5 10h2" stroke="#707070"/><path d="M0.5 12.5h3" stroke="#606060"/><path d="M0.5 1v12" stroke="#d0d0d0" stroke-width="0.6"/></g><defs><linearGradient id="hig" x1="0" y1="0" x2="0" y2="1"><stop offset="0" stop-color="#fcf8d0"/><stop offset="0.4" stop-color="#f0f090"/><stop offset="0.55" stop-color="#d8d820"/><stop offset="1" stop-color="#b8c010"/></linearGradient></defs><rect x="4" y="2.5" width="10.5" height="11.3" rx="1.3" fill="url(#hig)" stroke="#c8c078" stroke-width="0.7"/><path d="M6.8 3h1.3v2.5l.4 1.5-1 1-1-1 .3-1.5z" fill="#40382a"/></svg>
<div style="position:absolute;left:551.6px;top:123.5px;font-size:10.5px;line-height:10.5px;color:#2a2a18;font-weight:normal;white-space:nowrap;transform:scaleY(1.1);transform-origin:0 8.89px;">Основная конфигурация</div>
<svg style="position:absolute;left:746.3px;top:122.8px" width="14" height="13.5" viewBox="0 0 14 13.5"><g stroke-width="1"><path d="M1 1.5h3" stroke="#d04040"/><path d="M1 4.5h3" stroke="#a0a0a0"/><path d="M1 7.5h4" stroke="#4080c0"/><path d="M1 10.5h4" stroke="#a0a0a0"/><path d="M1 12.5h4" stroke="#606060"/></g><path d="M5 6l4-2 4.5 2v6l-4.5 1.5L5 12z" fill="#f0d820" stroke="#c0a010" stroke-width="0.6"/><path d="M9.5 7.5v6l4-1.5V6z" fill="#d8b018"/></svg>
<div style="position:absolute;left:764.5px;top:123.5px;font-size:10.5px;line-height:10.5px;color:#2a2a18;font-weight:normal;white-space:nowrap;transform:scaleY(1.1);transform-origin:0 8.89px;">Конфигурация поставщика</div>
<div style="position:absolute;left:922.6px;top:123.5px;font-size:10.5px;line-height:10.5px;color:#2a2a18;font-weight:normal;white-space:nowrap;transform:scaleY(1.1);transform-origin:0 8.89px;">Режим объединения и порядок подчин...</div>
<div style="position:absolute;left:529.0px;top:139.75px;width:211.0px;height:18.27px;background:#dcfcfc"></div>
<div style="position:absolute;left:741.0px;top:139.75px;width:175.79999999999995px;height:18.27px;background:#dcfcfc"></div>
<svg style="position:absolute;left:509.8px;top:141.75px" width="14" height="14" viewBox="0 0 14 14"><rect x="0.5" y="0.5" width="13" height="13" rx="1.2" fill="#fff" stroke="#c4c4c4" stroke-width="1"/><path d="M13.5 1.5v11q0 1-1 1H1.5" fill="none" stroke="#7c7c7c" stroke-width="1"/><path d="M2.8 4.6l1.8-1.8 7 7-0.6 2.2-2.2-.4z" fill="#52b852" stroke="#1e6a1e" stroke-width="0.9"/><path d="M4.2 4.6l5.8 5.8" stroke="#a8f0a0" stroke-width="0.9"/><path d="M9.2 11.6l2.8.8-.8-2.8z" fill="#0a1a0a"/></svg>
<svg style="position:absolute;left:534px;top:143px" width="11" height="11" viewBox="0 0 11 11"><circle cx="5.5" cy="5.5" r="4.2" fill="none" stroke="#a8aeae" stroke-width="1"/><path d="M3 5.5h5" stroke="#4a4a4a" stroke-width="1"/></svg>
<svg style="position:absolute;left:554.7px;top:143.685px" width="9" height="10" viewBox="0 0 9 10"><path d="M2.2 4.6V3.2a2.3 2.3 0 0 1 4.6 0v1.4" fill="none" stroke="#6a7684" stroke-width="1.4"/><rect x="1" y="4.4" width="7" height="5" rx="1" fill="#6a7684"/><rect x="2.6" y="6.2" width="1.4" height="2.4" fill="#e8eef4"/><rect x="5" y="6.2" width="1.4" height="2.4" fill="#e8eef4"/><rect x="2.6" y="6.2" width="3.8" height="1" fill="#e8eef4"/></svg>
<svg style="position:absolute;left:570.6px;top:141.285px" width="14.2" height="14.2" viewBox="0 0 16 16"><defs><radialGradient id="gc" cx="0.5" cy="0.3" r="0.75"><stop offset="0" stop-color="#fffbd0"/><stop offset="0.45" stop-color="#f4d448"/><stop offset="1" stop-color="#d8a818"/></radialGradient></defs><circle cx="8" cy="8" r="6.8" fill="url(#gc)" stroke="#d8c888" stroke-width="0.9"/></svg>
<div style="position:absolute;left:592.5px;top:144.08499999999998px;font-size:10.5px;line-height:10.5px;color:#000;font-weight:normal;white-space:nowrap;transform:scaleY(1.1);transform-origin:0 8.89px;">Розница</div>
<svg style="position:absolute;left:746px;top:143px" width="11" height="11" viewBox="0 0 11 11"><circle cx="5.5" cy="5.5" r="4.2" fill="none" stroke="#a8aeae" stroke-width="1"/><path d="M3 5.5h5" stroke="#4a4a4a" stroke-width="1"/></svg>
<svg style="position:absolute;left:766.5px;top:143.685px" width="9" height="10" viewBox="0 0 9 10"><path d="M2.2 4.6V3.2a2.3 2.3 0 0 1 4.6 0v1.4" fill="none" stroke="#6a7684" stroke-width="1.4"/><rect x="1" y="4.4" width="7" height="5" rx="1" fill="#6a7684"/><rect x="2.6" y="6.2" width="1.4" height="2.4" fill="#e8eef4"/><rect x="5" y="6.2" width="1.4" height="2.4" fill="#e8eef4"/><rect x="2.6" y="6.2" width="3.8" height="1" fill="#e8eef4"/></svg>
<svg style="position:absolute;left:782.4px;top:141.285px" width="14.2" height="14.2" viewBox="0 0 16 16"><defs><radialGradient id="gc" cx="0.5" cy="0.3" r="0.75"><stop offset="0" stop-color="#fffbd0"/><stop offset="0.45" stop-color="#f4d448"/><stop offset="1" stop-color="#d8a818"/></radialGradient></defs><circle cx="8" cy="8" r="6.8" fill="url(#gc)" stroke="#d8c888" stroke-width="0.9"/></svg>
<div style="position:absolute;left:804.3px;top:144.08499999999998px;font-size:10.5px;line-height:10.5px;color:#000;font-weight:normal;white-space:nowrap;transform:scaleY(1.1);transform-origin:0 8.89px;">Розница</div>
<svg style="position:absolute;left:553px;top:162px" width="11" height="11" viewBox="0 0 11 11"><circle cx="5.5" cy="5.5" r="4.2" fill="none" stroke="#a8aeae" stroke-width="1"/><path d="M3 5.5h5" stroke="#4a4a4a" stroke-width="1"/></svg>
<svg style="position:absolute;left:569.5999999999999px;top:159.655px" width="15" height="15" viewBox="0 0 16 16"><rect x="-2.4" y="-2.4" width="4.8" height="4.8" rx="1.4" transform="translate(7.5 4) rotate(45)" fill="#6aaee0" stroke="#2f6a9a" stroke-width="0.8"/><rect x="-2.4" y="-2.4" width="4.8" height="4.8" rx="1.4" transform="translate(4.8 11.8) rotate(45)" fill="#50c040" stroke="#2a8020" stroke-width="0.8"/><rect x="-2.4" y="-2.4" width="4.8" height="4.8" rx="1.4" transform="translate(12 10.2) rotate(45)" fill="#c09070" stroke="#7a5030" stroke-width="0.8"/></svg>
<div style="position:absolute;left:590.3px;top:162.355px;font-size:10.5px;line-height:10.5px;color:#000;font-weight:normal;white-space:nowrap;transform:scaleY(1.1);transform-origin:0 8.89px;">Общие</div>
<svg style="position:absolute;left:764px;top:162px" width="11" height="11" viewBox="0 0 11 11"><circle cx="5.5" cy="5.5" r="4.2" fill="none" stroke="#a8aeae" stroke-width="1"/><path d="M3 5.5h5" stroke="#4a4a4a" stroke-width="1"/></svg>
<svg style="position:absolute;left:781.3999999999999px;top:159.655px" width="15" height="15" viewBox="0 0 16 16"><rect x="-2.4" y="-2.4" width="4.8" height="4.8" rx="1.4" transform="translate(7.5 4) rotate(45)" fill="#6aaee0" stroke="#2f6a9a" stroke-width="0.8"/><rect x="-2.4" y="-2.4" width="4.8" height="4.8" rx="1.4" transform="translate(4.8 11.8) rotate(45)" fill="#50c040" stroke="#2a8020" stroke-width="0.8"/><rect x="-2.4" y="-2.4" width="4.8" height="4.8" rx="1.4" transform="translate(12 10.2) rotate(45)" fill="#c09070" stroke="#7a5030" stroke-width="0.8"/></svg>
<div style="position:absolute;left:802.0999999999999px;top:162.355px;font-size:10.5px;line-height:10.5px;color:#000;font-weight:normal;white-space:nowrap;transform:scaleY(1.1);transform-origin:0 8.89px;">Общие</div>
<svg style="position:absolute;left:571px;top:180px" width="11" height="11" viewBox="0 0 11 11"><circle cx="5.5" cy="5.5" r="4.2" fill="none" stroke="#a8aeae" stroke-width="1"/><path d="M3 5.5h5" stroke="#4a4a4a" stroke-width="1"/></svg>
<svg style="position:absolute;left:587.9px;top:177.92499999999998px" width="15" height="15" viewBox="0 0 16 16"><rect x="1.5" y="1.5" width="13" height="13" fill="#f8fafc" stroke="#60788f" stroke-width="1"/><rect x="2" y="2" width="12" height="2" fill="#7890a8"/><path d="M4 6.6h8M4 8.8h8M6.5 11h5.5" stroke="#e06060" stroke-width="1"/><path d="M4 13h8" stroke="#a0b0d0" stroke-width="0.8"/></svg>
<div style="position:absolute;left:608.6px;top:180.62499999999997px;font-size:10.5px;line-height:10.5px;color:#000;font-weight:normal;white-space:nowrap;transform:scaleY(1.1);transform-origin:0 8.89px;">Общие модули</div>
<svg style="position:absolute;left:783px;top:180px" width="11" height="11" viewBox="0 0 11 11"><circle cx="5.5" cy="5.5" r="4.2" fill="none" stroke="#a8aeae" stroke-width="1"/><path d="M3 5.5h5" stroke="#4a4a4a" stroke-width="1"/></svg>
<svg style="position:absolute;left:799.6999999999999px;top:177.92499999999998px" width="15" height="15" viewBox="0 0 16 16"><rect x="1.5" y="1.5" width="13" height="13" fill="#f8fafc" stroke="#60788f" stroke-width="1"/><rect x="2" y="2" width="12" height="2" fill="#7890a8"/><path d="M4 6.6h8M4 8.8h8M6.5 11h5.5" stroke="#e06060" stroke-width="1"/><path d="M4 13h8" stroke="#a0b0d0" stroke-width="0.8"/></svg>
<div style="position:absolute;left:820.4px;top:180.62499999999997px;font-size:10.5px;line-height:10.5px;color:#000;font-weight:normal;white-space:nowrap;transform:scaleY(1.1);transform-origin:0 8.89px;">Общие модули</div>
<div style="position:absolute;left:529.0px;top:194.56px;width:211.0px;height:18.27px;background:#dcfcfc"></div>
<div style="position:absolute;left:741.0px;top:194.56px;width:175.79999999999995px;height:18.27px;background:#dcfcfc"></div>
<svg style="position:absolute;left:509.8px;top:196.56px" width="14" height="14" viewBox="0 0 14 14"><rect x="0.5" y="0.5" width="13" height="13" rx="1.2" fill="#fff" stroke="#c4c4c4" stroke-width="1"/><path d="M13.5 1.5v11q0 1-1 1H1.5" fill="none" stroke="#7c7c7c" stroke-width="1"/><path d="M2.8 4.6l1.8-1.8 7 7-0.6 2.2-2.2-.4z" fill="#52b852" stroke="#1e6a1e" stroke-width="0.9"/><path d="M4.2 4.6l5.8 5.8" stroke="#a8f0a0" stroke-width="0.9"/><path d="M9.2 11.6l2.8.8-.8-2.8z" fill="#0a1a0a"/></svg>
<svg style="position:absolute;left:589px;top:198px" width="11" height="11" viewBox="0 0 11 11"><circle cx="5.5" cy="5.5" r="4.2" fill="none" stroke="#a8aeae" stroke-width="1"/><path d="M3 5.5h5" stroke="#4a4a4a" stroke-width="1"/><path d="M5.5 3v5" stroke="#4a4a4a" stroke-width="1"/></svg>
<svg style="position:absolute;left:609.6px;top:198.495px" width="9" height="10" viewBox="0 0 9 10"><path d="M2.2 4.6V3.2a2.3 2.3 0 0 1 4.6 0v1.4" fill="none" stroke="#6a7684" stroke-width="1.4"/><rect x="1" y="4.4" width="7" height="5" rx="1" fill="#6a7684"/><rect x="2.6" y="6.2" width="1.4" height="2.4" fill="#e8eef4"/><rect x="5" y="6.2" width="1.4" height="2.4" fill="#e8eef4"/><rect x="2.6" y="6.2" width="3.8" height="1" fill="#e8eef4"/></svg>
<svg style="position:absolute;left:625.0px;top:196.195px" width="15" height="15" viewBox="0 0 16 16"><rect x="1.5" y="1.5" width="13" height="13" fill="#f8fafc" stroke="#60788f" stroke-width="1"/><rect x="2" y="2" width="12" height="2" fill="#7890a8"/><path d="M4 6.6h8M4 8.8h8M6.5 11h5.5" stroke="#e06060" stroke-width="1"/><path d="M4 13h8" stroke="#a0b0d0" stroke-width="0.8"/></svg>
<div style="position:absolute;left:647.4px;top:198.89499999999998px;font-size:10.5px;line-height:10.5px;color:#000;font-weight:normal;white-space:nowrap;transform:scaleY(1.1);transform-origin:0 8.89px;">ОбщегоНазначе...</div>
<svg style="position:absolute;left:801px;top:198px" width="11" height="11" viewBox="0 0 11 11"><circle cx="5.5" cy="5.5" r="4.2" fill="none" stroke="#a8aeae" stroke-width="1"/><path d="M3 5.5h5" stroke="#4a4a4a" stroke-width="1"/><path d="M5.5 3v5" stroke="#4a4a4a" stroke-width="1"/></svg>
<svg style="position:absolute;left:821.4px;top:198.495px" width="9" height="10" viewBox="0 0 9 10"><path d="M2.2 4.6V3.2a2.3 2.3 0 0 1 4.6 0v1.4" fill="none" stroke="#6a7684" stroke-width="1.4"/><rect x="1" y="4.4" width="7" height="5" rx="1" fill="#6a7684"/><rect x="2.6" y="6.2" width="1.4" height="2.4" fill="#e8eef4"/><rect x="5" y="6.2" width="1.4" height="2.4" fill="#e8eef4"/><rect x="2.6" y="6.2" width="3.8" height="1" fill="#e8eef4"/></svg>
<svg style="position:absolute;left:836.8px;top:196.195px" width="15" height="15" viewBox="0 0 16 16"><rect x="1.5" y="1.5" width="13" height="13" fill="#f8fafc" stroke="#60788f" stroke-width="1"/><rect x="2" y="2" width="12" height="2" fill="#7890a8"/><path d="M4 6.6h8M4 8.8h8M6.5 11h5.5" stroke="#e06060" stroke-width="1"/><path d="M4 13h8" stroke="#a0b0d0" stroke-width="0.8"/></svg>
<div style="position:absolute;left:859.1999999999999px;top:198.89499999999998px;font-size:10.5px;line-height:10.5px;color:#000;font-weight:normal;white-space:nowrap;transform:scaleY(1.1);transform-origin:0 8.89px;">Общего...</div>
<svg style="position:absolute;left:571px;top:216px" width="11" height="11" viewBox="0 0 11 11"><circle cx="5.5" cy="5.5" r="4.2" fill="none" stroke="#a8aeae" stroke-width="1"/><path d="M3 5.5h5" stroke="#4a4a4a" stroke-width="1"/></svg>
<svg style="position:absolute;left:587.9px;top:214.46499999999997px" width="15" height="15" viewBox="0 0 16 16"><rect x="1.5" y="1.5" width="13" height="13" fill="#fff" stroke="#60788f" stroke-width="1"/><rect x="2" y="2" width="12" height="2" fill="#90a8c0"/><g fill="#d8dce4"><rect x="3.5" y="6" width="4" height="2.5"/><rect x="8.5" y="6" width="4" height="2.5"/><rect x="8.5" y="9.5" width="4" height="3"/></g><rect x="3.5" y="9.5" width="4" height="3" fill="#f0c0a0"/></svg>
<div style="position:absolute;left:608.6px;top:217.16499999999996px;font-size:10.5px;line-height:10.5px;color:#000;font-weight:normal;white-space:nowrap;transform:scaleY(1.1);transform-origin:0 8.89px;">Общие макеты</div>
<svg style="position:absolute;left:783px;top:216px" width="11" height="11" viewBox="0 0 11 11"><circle cx="5.5" cy="5.5" r="4.2" fill="none" stroke="#a8aeae" stroke-width="1"/><path d="M3 5.5h5" stroke="#4a4a4a" stroke-width="1"/></svg>
<svg style="position:absolute;left:799.6999999999999px;top:214.46499999999997px" width="15" height="15" viewBox="0 0 16 16"><rect x="1.5" y="1.5" width="13" height="13" fill="#fff" stroke="#60788f" stroke-width="1"/><rect x="2" y="2" width="12" height="2" fill="#90a8c0"/><g fill="#d8dce4"><rect x="3.5" y="6" width="4" height="2.5"/><rect x="8.5" y="6" width="4" height="2.5"/><rect x="8.5" y="9.5" width="4" height="3"/></g><rect x="3.5" y="9.5" width="4" height="3" fill="#f0c0a0"/></svg>
<div style="position:absolute;left:820.4px;top:217.16499999999996px;font-size:10.5px;line-height:10.5px;color:#000;font-weight:normal;white-space:nowrap;transform:scaleY(1.1);transform-origin:0 8.89px;">Общие макеты</div>
<div style="position:absolute;left:529.0px;top:231.1px;width:211.0px;height:18.27px;background:#fae0c6"></div>
<svg style="position:absolute;left:509.8px;top:233.1px" width="14" height="14" viewBox="0 0 14 14"><rect x="0.5" y="0.5" width="13" height="13" rx="1.2" fill="#fff" stroke="#c4c4c4" stroke-width="1"/><path d="M13.5 1.5v11q0 1-1 1H1.5" fill="none" stroke="#7c7c7c" stroke-width="1"/><path d="M7 3v8M3 7h8" stroke="#2a8a2a" stroke-width="2.3"/><path d="M7 3.5v7M3.5 7h7" stroke="#58c050" stroke-width="0.8"/></svg>
<svg style="position:absolute;left:589px;top:235px" width="11" height="11" viewBox="0 0 11 11"><circle cx="5.5" cy="5.5" r="4.2" fill="none" stroke="#a8aeae" stroke-width="1"/><path d="M3 5.5h5" stroke="#4a4a4a" stroke-width="1"/><path d="M5.5 3v5" stroke="#4a4a4a" stroke-width="1"/></svg>
<svg style="position:absolute;left:609.6px;top:235.035px" width="9" height="10" viewBox="0 0 9 10"><path d="M2.2 4.6V3.2a2.3 2.3 0 0 1 4.6 0v1.4" fill="none" stroke="#6a7684" stroke-width="1.4"/><rect x="1" y="4.4" width="7" height="5" rx="1" fill="#6a7684"/><rect x="2.6" y="6.2" width="1.4" height="2.4" fill="#e8eef4"/><rect x="5" y="6.2" width="1.4" height="2.4" fill="#e8eef4"/><rect x="2.6" y="6.2" width="3.8" height="1" fill="#e8eef4"/></svg>
<svg style="position:absolute;left:625.0px;top:232.73499999999999px" width="15" height="15" viewBox="0 0 16 16"><rect x="1.5" y="1.5" width="13" height="13" fill="#fff" stroke="#60788f" stroke-width="1"/><rect x="2" y="2" width="12" height="2" fill="#506880"/><path d="M8 6.5h4M4 8.7h8M4 10.9h5M4 13h8" stroke="#8aa4c4" stroke-width="1"/><path d="M4 10.9h4" stroke="#e8a080" stroke-width="1"/></svg>
<div style="position:absolute;left:647.4px;top:235.43499999999997px;font-size:10.5px;line-height:10.5px;color:#000;font-weight:normal;white-space:nowrap;transform:scaleY(1.1);transform-origin:0 8.89px;">ТОРГ13_рарус</div>
<svg style="position:absolute;left:801px;top:235px" width="11" height="11" viewBox="0 0 11 11"><circle cx="5.5" cy="5.5" r="4.2" fill="none" stroke="#a8aeae" stroke-width="1"/><path d="M3 5.5h5" stroke="#4a4a4a" stroke-width="1"/><path d="M5.5 3v5" stroke="#4a4a4a" stroke-width="1"/></svg>
<svg style="position:absolute;left:821.4px;top:235.035px" width="9" height="10" viewBox="0 0 9 10"><path d="M2.2 4.6V3.2a2.3 2.3 0 0 1 4.6 0v1.4" fill="none" stroke="#6a7684" stroke-width="1.4"/><rect x="1" y="4.4" width="7" height="5" rx="1" fill="#6a7684"/><rect x="2.6" y="6.2" width="1.4" height="2.4" fill="#e8eef4"/><rect x="5" y="6.2" width="1.4" height="2.4" fill="#e8eef4"/><rect x="2.6" y="6.2" width="3.8" height="1" fill="#e8eef4"/></svg>
<svg style="position:absolute;left:836.8px;top:232.73499999999999px" width="15" height="15" viewBox="0 0 16 16"><rect x="1.5" y="1.5" width="13" height="13" fill="#fff" stroke="#60788f" stroke-width="1"/><rect x="2" y="2" width="12" height="2" fill="#506880"/><path d="M8 6.5h4M4 8.7h8M4 10.9h5M4 13h8" stroke="#8aa4c4" stroke-width="1"/><path d="M4 10.9h4" stroke="#e8a080" stroke-width="1"/></svg>
<div style="position:absolute;left:859.1999999999999px;top:235.43499999999997px;font-size:10.5px;line-height:10.5px;color:#000;font-weight:normal;white-space:nowrap;transform:scaleY(1.1);transform-origin:0 8.89px;">&lt;Отсутст...</div>
<svg style="position:absolute;left:553px;top:253px" width="11" height="11" viewBox="0 0 11 11"><circle cx="5.5" cy="5.5" r="4.2" fill="none" stroke="#a8aeae" stroke-width="1"/><path d="M3 5.5h5" stroke="#4a4a4a" stroke-width="1"/></svg>
<svg style="position:absolute;left:569.5999999999999px;top:251.005px" width="15" height="15" viewBox="0 0 16 16"><path d="M2.5 1.5h11v13h-11z" fill="#fbfdff" stroke="#8098b0" stroke-width="1"/><path d="M5 4h6M5 6.5h6M5 9h6M5 11.5h6" stroke="#a8b8c8"/></svg>
<div style="position:absolute;left:590.3px;top:253.70499999999998px;font-size:10.5px;line-height:10.5px;color:#000;font-weight:normal;white-space:nowrap;transform:scaleY(1.1);transform-origin:0 8.89px;">Документы</div>
<svg style="position:absolute;left:764px;top:253px" width="11" height="11" viewBox="0 0 11 11"><circle cx="5.5" cy="5.5" r="4.2" fill="none" stroke="#a8aeae" stroke-width="1"/><path d="M3 5.5h5" stroke="#4a4a4a" stroke-width="1"/></svg>
<svg style="position:absolute;left:781.3999999999999px;top:251.005px" width="15" height="15" viewBox="0 0 16 16"><path d="M2.5 1.5h11v13h-11z" fill="#fbfdff" stroke="#8098b0" stroke-width="1"/><path d="M5 4h6M5 6.5h6M5 9h6M5 11.5h6" stroke="#a8b8c8"/></svg>
<div style="position:absolute;left:802.0999999999999px;top:253.70499999999998px;font-size:10.5px;line-height:10.5px;color:#000;font-weight:normal;white-space:nowrap;transform:scaleY(1.1);transform-origin:0 8.89px;">Документы</div>
<div style="position:absolute;left:529.0px;top:267.64px;width:211.0px;height:18.27px;background:#dcfcfc"></div>
<div style="position:absolute;left:741.0px;top:267.64px;width:175.79999999999995px;height:18.27px;background:#dcfcfc"></div>
<svg style="position:absolute;left:509.8px;top:269.64px" width="14" height="14" viewBox="0 0 14 14"><rect x="0.5" y="0.5" width="13" height="13" rx="1.2" fill="#fff" stroke="#c4c4c4" stroke-width="1"/><path d="M13.5 1.5v11q0 1-1 1H1.5" fill="none" stroke="#7c7c7c" stroke-width="1"/><path d="M2.8 4.6l1.8-1.8 7 7-0.6 2.2-2.2-.4z" fill="#52b852" stroke="#1e6a1e" stroke-width="0.9"/><path d="M4.2 4.6l5.8 5.8" stroke="#a8f0a0" stroke-width="0.9"/><path d="M9.2 11.6l2.8.8-.8-2.8z" fill="#0a1a0a"/></svg>
<svg style="position:absolute;left:571px;top:271px" width="11" height="11" viewBox="0 0 11 11"><circle cx="5.5" cy="5.5" r="4.2" fill="none" stroke="#a8aeae" stroke-width="1"/><path d="M3 5.5h5" stroke="#4a4a4a" stroke-width="1"/></svg>
<svg style="position:absolute;left:591.3000000000001px;top:271.575px" width="9" height="10" viewBox="0 0 9 10"><path d="M2.2 4.6V3.2a2.3 2.3 0 0 1 4.6 0v1.4" fill="none" stroke="#6a7684" stroke-width="1.4"/><rect x="1" y="4.4" width="7" height="5" rx="1" fill="#6a7684"/><rect x="2.6" y="6.2" width="1.4" height="2.4" fill="#e8eef4"/><rect x="5" y="6.2" width="1.4" height="2.4" fill="#e8eef4"/><rect x="2.6" y="6.2" width="3.8" height="1" fill="#e8eef4"/></svg>
<svg style="position:absolute;left:606.7px;top:269.275px" width="15" height="15" viewBox="0 0 16 16"><path d="M2.5 1.5h11v13h-11z" fill="#fbfdff" stroke="#8098b0" stroke-width="1"/><path d="M5 4h6M5 6.5h6M5 9h6M5 11.5h6" stroke="#a8b8c8"/></svg>
<div style="position:absolute;left:629.1px;top:271.97499999999997px;font-size:10.5px;line-height:10.5px;color:#000;font-weight:normal;white-space:nowrap;transform:scaleY(1.1);transform-origin:0 8.89px;">ПеремещениеТова...</div>
<svg style="position:absolute;left:783px;top:271px" width="11" height="11" viewBox="0 0 11 11"><circle cx="5.5" cy="5.5" r="4.2" fill="none" stroke="#a8aeae" stroke-width="1"/><path d="M3 5.5h5" stroke="#4a4a4a" stroke-width="1"/></svg>
<svg style="position:absolute;left:803.1px;top:271.575px" width="9" height="10" viewBox="0 0 9 10"><path d="M2.2 4.6V3.2a2.3 2.3 0 0 1 4.6 0v1.4" fill="none" stroke="#6a7684" stroke-width="1.4"/><rect x="1" y="4.4" width="7" height="5" rx="1" fill="#6a7684"/><rect x="2.6" y="6.2" width="1.4" height="2.4" fill="#e8eef4"/><rect x="5" y="6.2" width="1.4" height="2.4" fill="#e8eef4"/><rect x="2.6" y="6.2" width="3.8" height="1" fill="#e8eef4"/></svg>
<svg style="position:absolute;left:818.5px;top:269.275px" width="15" height="15" viewBox="0 0 16 16"><path d="M2.5 1.5h11v13h-11z" fill="#fbfdff" stroke="#8098b0" stroke-width="1"/><path d="M5 4h6M5 6.5h6M5 9h6M5 11.5h6" stroke="#a8b8c8"/></svg>
<div style="position:absolute;left:840.9px;top:271.97499999999997px;font-size:10.5px;line-height:10.5px;color:#000;font-weight:normal;white-space:nowrap;transform:scaleY(1.1);transform-origin:0 8.89px;">Перемещен...</div>
<div style="position:absolute;left:529.0px;top:285.90999999999997px;width:211.0px;height:18.27px;background:#dcfcfc"></div>
<div style="position:absolute;left:741.0px;top:285.90999999999997px;width:175.79999999999995px;height:18.27px;background:#dcfcfc"></div>
<svg style="position:absolute;left:589px;top:290px" width="11" height="11" viewBox="0 0 11 11"><circle cx="5.5" cy="5.5" r="4.2" fill="none" stroke="#a8aeae" stroke-width="1"/><path d="M3 5.5h5" stroke="#4a4a4a" stroke-width="1"/><path d="M5.5 3v5" stroke="#4a4a4a" stroke-width="1"/></svg>
<div style="position:absolute;left:607.4px;top:290.24499999999995px;font-size:10.5px;line-height:10.5px;color:#000;font-weight:normal;white-space:nowrap;transform:scaleY(1.1);transform-origin:0 8.89px;">Свойства</div>
<svg style="position:absolute;left:801px;top:290px" width="11" height="11" viewBox="0 0 11 11"><circle cx="5.5" cy="5.5" r="4.2" fill="none" stroke="#a8aeae" stroke-width="1"/><path d="M3 5.5h5" stroke="#4a4a4a" stroke-width="1"/><path d="M5.5 3v5" stroke="#4a4a4a" stroke-width="1"/></svg>
<div style="position:absolute;left:819.1999999999999px;top:290.24499999999995px;font-size:10.5px;line-height:10.5px;color:#000;font-weight:normal;white-space:nowrap;transform:scaleY(1.1);transform-origin:0 8.89px;">Свойства</div>
<svg style="position:absolute;left:589px;top:308px" width="11" height="11" viewBox="0 0 11 11"><circle cx="5.5" cy="5.5" r="4.2" fill="none" stroke="#a8aeae" stroke-width="1"/><path d="M3 5.5h5" stroke="#4a4a4a" stroke-width="1"/><path d="M5.5 3v5" stroke="#4a4a4a" stroke-width="1"/></svg>
<svg style="position:absolute;left:606.1999999999999px;top:305.815px" width="15" height="15" viewBox="0 0 16 16"><rect x="2.5" y="6.2" width="10" height="3.6" rx="1.8" fill="#b8d4ec" stroke="#4a6a90" stroke-width="1.1"/></svg>
<div style="position:absolute;left:626.9px;top:308.515px;font-size:10.5px;line-height:10.5px;color:#000;font-weight:normal;white-space:nowrap;transform:scaleY(1.1);transform-origin:0 8.89px;">Реквизиты</div>
<svg style="position:absolute;left:801px;top:308px" width="11" height="11" viewBox="0 0 11 11"><circle cx="5.5" cy="5.5" r="4.2" fill="none" stroke="#a8aeae" stroke-width="1"/><path d="M3 5.5h5" stroke="#4a4a4a" stroke-width="1"/><path d="M5.5 3v5" stroke="#4a4a4a" stroke-width="1"/></svg>
<svg style="position:absolute;left:817.9999999999999px;top:305.815px" width="15" height="15" viewBox="0 0 16 16"><rect x="2.5" y="6.2" width="10" height="3.6" rx="1.8" fill="#b8d4ec" stroke="#4a6a90" stroke-width="1.1"/></svg>
<div style="position:absolute;left:838.6999999999999px;top:308.515px;font-size:10.5px;line-height:10.5px;color:#000;font-weight:normal;white-space:nowrap;transform:scaleY(1.1);transform-origin:0 8.89px;">Реквизиты</div>
<svg style="position:absolute;left:589px;top:326px" width="11" height="11" viewBox="0 0 11 11"><circle cx="5.5" cy="5.5" r="4.2" fill="none" stroke="#a8aeae" stroke-width="1"/><path d="M3 5.5h5" stroke="#4a4a4a" stroke-width="1"/><path d="M5.5 3v5" stroke="#4a4a4a" stroke-width="1"/></svg>
<svg style="position:absolute;left:606.1999999999999px;top:324.085px" width="15" height="15" viewBox="0 0 16 16"><rect x="1.5" y="1.5" width="13" height="13" fill="#fff" stroke="#60788f" stroke-width="1"/><rect x="2" y="2" width="12" height="2" fill="#506880"/><path d="M4 6.3h4M4 8.6h4M4 10.9h2.5M4 13h2.5" stroke="#404a58" stroke-width="1.1"/><path d="M8.5 6.3h3.5M8.5 8.6h3.5M7 10.9h5M7 13h5" stroke="#b0b8c4" stroke-width="0.9"/></svg>
<div style="position:absolute;left:626.9px;top:326.78499999999997px;font-size:10.5px;line-height:10.5px;color:#000;font-weight:normal;white-space:nowrap;transform:scaleY(1.1);transform-origin:0 8.89px;">Формы</div>
<svg style="position:absolute;left:801px;top:326px" width="11" height="11" viewBox="0 0 11 11"><circle cx="5.5" cy="5.5" r="4.2" fill="none" stroke="#a8aeae" stroke-width="1"/><path d="M3 5.5h5" stroke="#4a4a4a" stroke-width="1"/><path d="M5.5 3v5" stroke="#4a4a4a" stroke-width="1"/></svg>
<svg style="position:absolute;left:817.9999999999999px;top:324.085px" width="15" height="15" viewBox="0 0 16 16"><rect x="1.5" y="1.5" width="13" height="13" fill="#fff" stroke="#60788f" stroke-width="1"/><rect x="2" y="2" width="12" height="2" fill="#506880"/><path d="M4 6.3h4M4 8.6h4M4 10.9h2.5M4 13h2.5" stroke="#404a58" stroke-width="1.1"/><path d="M8.5 6.3h3.5M8.5 8.6h3.5M7 10.9h5M7 13h5" stroke="#b0b8c4" stroke-width="0.9"/></svg>
<div style="position:absolute;left:838.6999999999999px;top:326.78499999999997px;font-size:10.5px;line-height:10.5px;color:#000;font-weight:normal;white-space:nowrap;transform:scaleY(1.1);transform-origin:0 8.89px;">Формы</div>
<svg style="position:absolute;left:589px;top:344px" width="11" height="11" viewBox="0 0 11 11"><circle cx="5.5" cy="5.5" r="4.2" fill="none" stroke="#a8aeae" stroke-width="1"/><path d="M3 5.5h5" stroke="#4a4a4a" stroke-width="1"/><path d="M5.5 3v5" stroke="#4a4a4a" stroke-width="1"/></svg>
<svg style="position:absolute;left:606.1999999999999px;top:342.355px" width="15" height="15" viewBox="0 0 16 16"><rect x="1.5" y="1.5" width="13" height="13" fill="#fff" stroke="#60788f" stroke-width="1"/><rect x="2" y="2" width="12" height="2" fill="#506880"/><rect x="4" y="5.5" width="8" height="7.5" fill="none" stroke="#8090a8" stroke-width="0.8" stroke-dasharray="1 1"/><circle cx="8" cy="9.2" r="2.6" fill="#f0a0a8"/><path d="M8 5.5v7.5M4 9.2h8" stroke="#8090a8" stroke-width="0.6" stroke-dasharray="1 1"/></svg>
<div style="position:absolute;left:626.9px;top:345.055px;font-size:10.5px;line-height:10.5px;color:#000;font-weight:normal;white-space:nowrap;transform:scaleY(1.1);transform-origin:0 8.89px;">Макеты</div>
<svg style="position:absolute;left:801px;top:344px" width="11" height="11" viewBox="0 0 11 11"><circle cx="5.5" cy="5.5" r="4.2" fill="none" stroke="#a8aeae" stroke-width="1"/><path d="M3 5.5h5" stroke="#4a4a4a" stroke-width="1"/><path d="M5.5 3v5" stroke="#4a4a4a" stroke-width="1"/></svg>
<svg style="position:absolute;left:817.9999999999999px;top:342.355px" width="15" height="15" viewBox="0 0 16 16"><rect x="1.5" y="1.5" width="13" height="13" fill="#fff" stroke="#60788f" stroke-width="1"/><rect x="2" y="2" width="12" height="2" fill="#506880"/><rect x="4" y="5.5" width="8" height="7.5" fill="none" stroke="#8090a8" stroke-width="0.8" stroke-dasharray="1 1"/><circle cx="8" cy="9.2" r="2.6" fill="#f0a0a8"/><path d="M8 5.5v7.5M4 9.2h8" stroke="#8090a8" stroke-width="0.6" stroke-dasharray="1 1"/></svg>
<div style="position:absolute;left:838.6999999999999px;top:345.055px;font-size:10.5px;line-height:10.5px;color:#000;font-weight:normal;white-space:nowrap;transform:scaleY(1.1);transform-origin:0 8.89px;">Макеты</div>
<div style="position:absolute;left:529.0px;top:358.99px;width:211.0px;height:18.27px;background:#6f9bd0"></div>
<div style="position:absolute;left:741.0px;top:358.99px;width:175.79999999999995px;height:18.27px;background:#6f9bd0"></div>
<div style="position:absolute;left:506.2px;top:358.99px;width:21.80000000000001px;height:18.27px;background:#6f9bd0"></div>
<div style="position:absolute;left:917.8px;top:358.99px;width:207.5px;height:18.27px;background:#6f9bd0"></div>
<div style="position:absolute;left:1126.3px;top:358.99px;width:96.29999999999995px;height:18.27px;background:#5068c0"></div>
<svg style="position:absolute;left:509.8px;top:360.99px" width="14" height="14" viewBox="0 0 14 14"><rect x="0.5" y="0.5" width="13" height="13" rx="1.2" fill="#78a0d2" stroke="#b4c8e4" stroke-width="1"/><path d="M13.5 1.5v11q0 1-1 1H1.5" fill="none" stroke="#a0b8dc" stroke-width="1"/><path d="M2.8 4.6l1.8-1.8 7 7-0.6 2.2-2.2-.4z" fill="#52b852" stroke="#1e6a1e" stroke-width="0.9"/><path d="M4.2 4.6l5.8 5.8" stroke="#a8f0a0" stroke-width="0.9"/><path d="M9.2 11.6l2.8.8-.8-2.8z" fill="#0a1a0a"/></svg>
<svg style="position:absolute;left:571px;top:363px" width="11" height="11" viewBox="0 0 11 11"><circle cx="5.5" cy="5.5" r="4.2" fill="#ffffff" stroke="#dde6f4" stroke-width="1"/><path d="M3 5.5h5" stroke="#2a2a2a" stroke-width="1"/></svg>
<svg style="position:absolute;left:591.3000000000001px;top:362.925px" width="9" height="10" viewBox="0 0 9 10"><path d="M2.2 4.6V3.2a2.3 2.3 0 0 1 4.6 0v1.4" fill="none" stroke="#f4f6fa" stroke-width="1.4"/><rect x="1" y="4.4" width="7" height="5" rx="1" fill="#3e4656"/><rect x="2.6" y="6.2" width="1.4" height="2.4" fill="#d8e0ec"/><rect x="5" y="6.2" width="1.4" height="2.4" fill="#d8e0ec"/><rect x="2.6" y="6.2" width="3.8" height="1" fill="#d8e0ec"/></svg>
<svg style="position:absolute;left:606.7px;top:360.625px" width="15" height="15" viewBox="0 0 16 16"><path d="M2.5 1.5h11v13h-11z" fill="#fbfdff" stroke="#8098b0" stroke-width="1"/><path d="M5 4h6M5 6.5h6M5 9h6M5 11.5h6" stroke="#a8b8c8"/></svg>
<div style="position:absolute;left:629.1px;top:363.325px;font-size:10.5px;line-height:10.5px;color:#e8f0ff;font-weight:normal;white-space:nowrap;transform:scaleY(1.1);transform-origin:0 8.89px;">ЧекККМ</div>
<svg style="position:absolute;left:783px;top:363px" width="11" height="11" viewBox="0 0 11 11"><circle cx="5.5" cy="5.5" r="4.2" fill="#ffffff" stroke="#dde6f4" stroke-width="1"/><path d="M3 5.5h5" stroke="#2a2a2a" stroke-width="1"/></svg>
<svg style="position:absolute;left:803.1px;top:362.925px" width="9" height="10" viewBox="0 0 9 10"><path d="M2.2 4.6V3.2a2.3 2.3 0 0 1 4.6 0v1.4" fill="none" stroke="#f4f6fa" stroke-width="1.4"/><rect x="1" y="4.4" width="7" height="5" rx="1" fill="#3e4656"/><rect x="2.6" y="6.2" width="1.4" height="2.4" fill="#d8e0ec"/><rect x="5" y="6.2" width="1.4" height="2.4" fill="#d8e0ec"/><rect x="2.6" y="6.2" width="3.8" height="1" fill="#d8e0ec"/></svg>
<svg style="position:absolute;left:818.5px;top:360.625px" width="15" height="15" viewBox="0 0 16 16"><path d="M2.5 1.5h11v13h-11z" fill="#fbfdff" stroke="#8098b0" stroke-width="1"/><path d="M5 4h6M5 6.5h6M5 9h6M5 11.5h6" stroke="#a8b8c8"/></svg>
<div style="position:absolute;left:840.9px;top:363.325px;font-size:10.5px;line-height:10.5px;color:#e8f0ff;font-weight:normal;white-space:nowrap;transform:scaleY(1.1);transform-origin:0 8.89px;">ЧекККМ</div>
<svg style="position:absolute;left:589px;top:381px" width="11" height="11" viewBox="0 0 11 11"><circle cx="5.5" cy="5.5" r="4.2" fill="none" stroke="#a8aeae" stroke-width="1"/><path d="M3 5.5h5" stroke="#4a4a4a" stroke-width="1"/><path d="M5.5 3v5" stroke="#4a4a4a" stroke-width="1"/></svg>
<svg style="position:absolute;left:606.1999999999999px;top:378.895px" width="15" height="15" viewBox="0 0 16 16"><rect x="1.5" y="1.5" width="13" height="13" fill="#fff" stroke="#60788f" stroke-width="1"/><rect x="2" y="2" width="12" height="2" fill="#506880"/><path d="M4 6.3h4M4 8.6h4M4 10.9h2.5M4 13h2.5" stroke="#404a58" stroke-width="1.1"/><path d="M8.5 6.3h3.5M8.5 8.6h3.5M7 10.9h5M7 13h5" stroke="#b0b8c4" stroke-width="0.9"/></svg>
<div style="position:absolute;left:626.9px;top:381.59499999999997px;font-size:10.5px;line-height:10.5px;color:#000;font-weight:normal;white-space:nowrap;transform:scaleY(1.1);transform-origin:0 8.89px;">Формы</div>
<svg style="position:absolute;left:801px;top:381px" width="11" height="11" viewBox="0 0 11 11"><circle cx="5.5" cy="5.5" r="4.2" fill="none" stroke="#a8aeae" stroke-width="1"/><path d="M3 5.5h5" stroke="#4a4a4a" stroke-width="1"/><path d="M5.5 3v5" stroke="#4a4a4a" stroke-width="1"/></svg>
<svg style="position:absolute;left:817.9999999999999px;top:378.895px" width="15" height="15" viewBox="0 0 16 16"><rect x="1.5" y="1.5" width="13" height="13" fill="#fff" stroke="#60788f" stroke-width="1"/><rect x="2" y="2" width="12" height="2" fill="#506880"/><path d="M4 6.3h4M4 8.6h4M4 10.9h2.5M4 13h2.5" stroke="#404a58" stroke-width="1.1"/><path d="M8.5 6.3h3.5M8.5 8.6h3.5M7 10.9h5M7 13h5" stroke="#b0b8c4" stroke-width="0.9"/></svg>
<div style="position:absolute;left:838.6999999999999px;top:381.59499999999997px;font-size:10.5px;line-height:10.5px;color:#000;font-weight:normal;white-space:nowrap;transform:scaleY(1.1);transform-origin:0 8.89px;">Формы</div>
</body></html>
